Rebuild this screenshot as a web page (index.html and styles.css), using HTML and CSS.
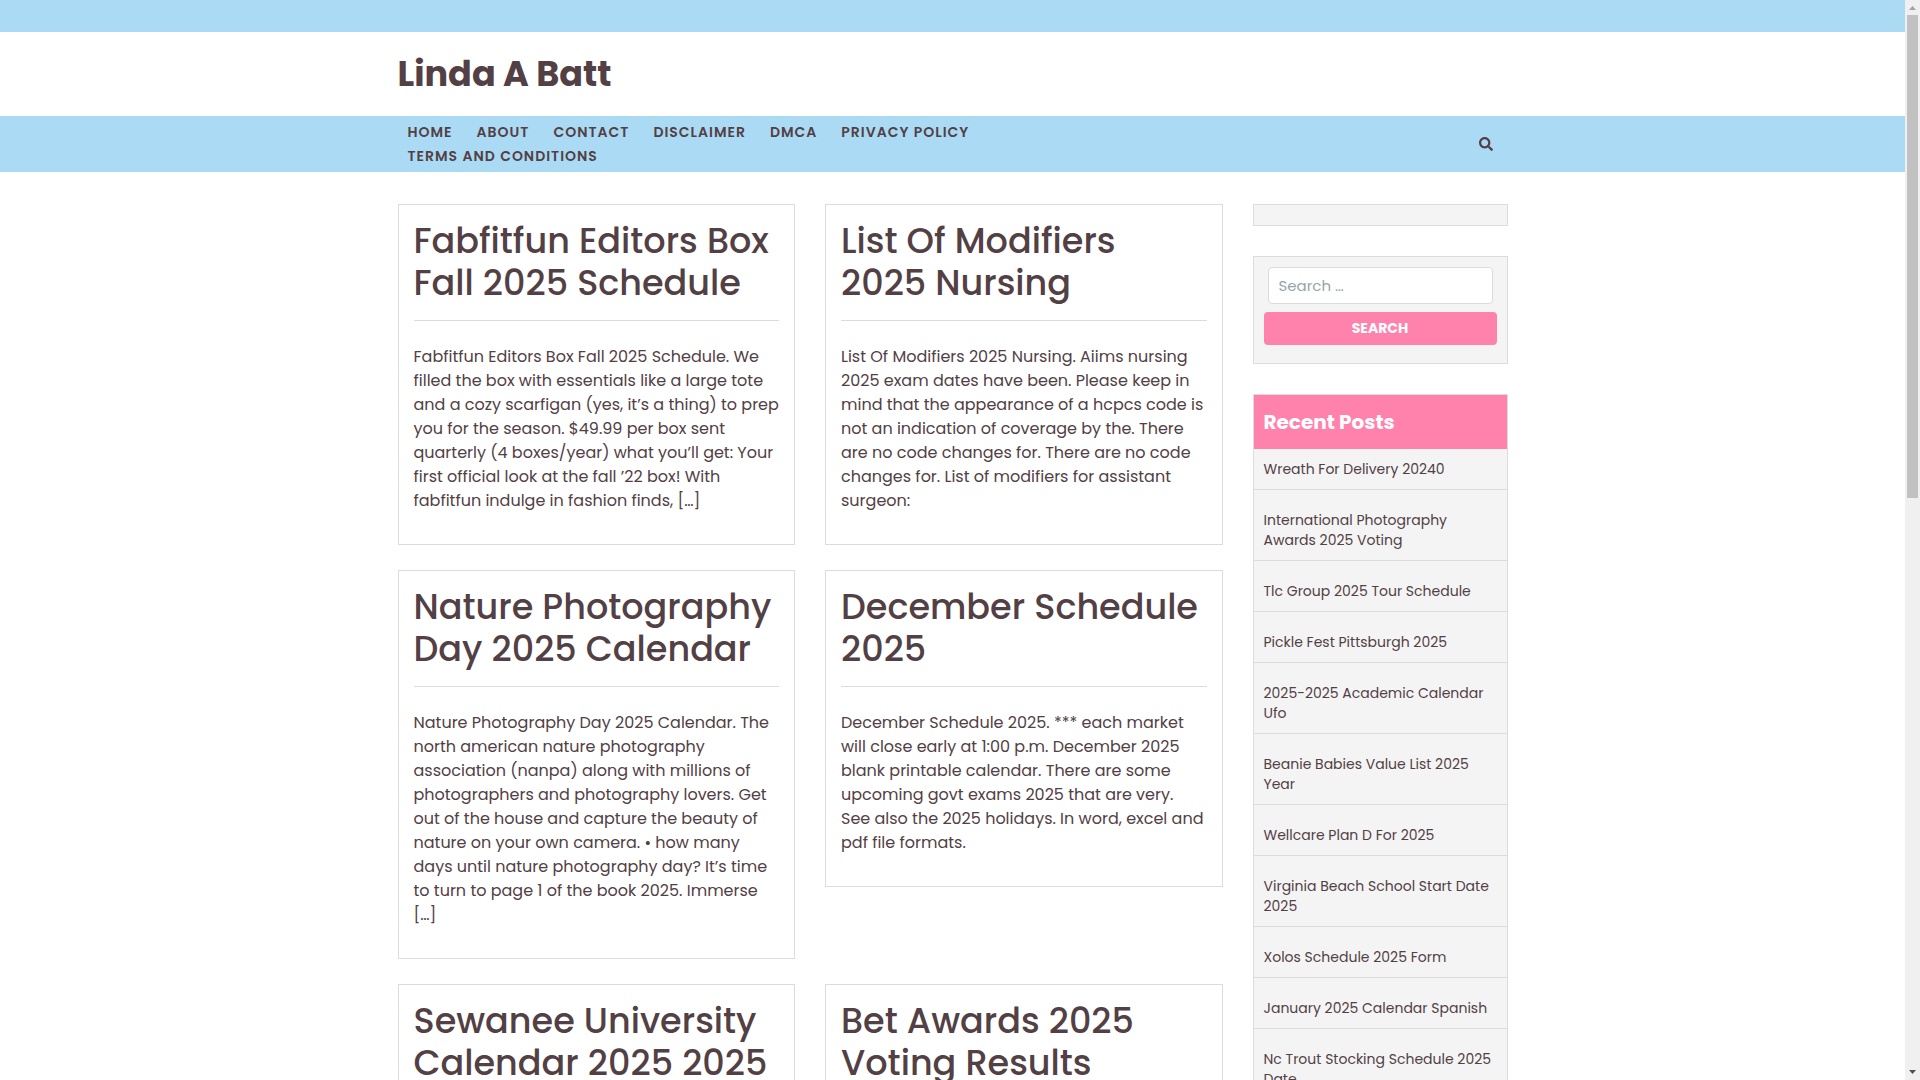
FILE: index.html
```html
<!DOCTYPE html>
<html lang="en">
  <head>
    <meta charset="UTF-8" />
    <meta name="viewport" content="width=device-width, initial-scale=1.0" />
    <title>Linda A Batt</title>
    <link rel="stylesheet" href="styles.css">
  </head>
  <body>
    <div class="top-bar"></div>

    <header class="site-header">
      <div class="container">
        <p class="site-title"><a href="#">Linda A Batt</a></p>
      </div>
    </header>

    <div class="menu-bar">
      <div class="container menu-row">
        <nav class="main-menu" aria-label="Main menu">
          <a href="#">Home</a>
          <a href="#">About</a>
          <a href="#">Contact</a>
          <a href="#">Disclaimer</a>
          <a href="#">DMCA</a>
          <a href="#">Privacy Policy</a>
          <a href="#">Terms and Conditions</a>
        </nav>
        <button class="search-toggle" type="button" aria-label="Open search">
          <svg viewBox="0 0 512 512" aria-hidden="true">
            <path d="M505 442.700L405.300 343c-4.500-4.500-10.600-7-17-7H372c27.600-35.300 44-79.700 44-128C416 93.100 322.900 0 208 0S0 93.100 0 208s93.100 208 208 208c48.300 0 92.700-16.400 128-44v16.300c0 6.400 2.500 12.500 7 17l99.700 99.700c9.400 9.400 24.600 9.400 33.900 0l28.300-28.300c9.400-9.400 9.400-24.600.1-34zM208 336c-70.700 0-128-57.200-128-128 0-70.700 57.200-128 128-128 70.700 0 128 57.200 128 128 0 70.700-57.200 128-128 128z" />
          </svg>
        </button>
      </div>
    </div>

    <div class="container page-layout">
      <main class="posts">
        <article class="post">
          <h2><a href="#">Fabfitfun Editors Box Fall 2025 Schedule</a></h2>
          <p>Fabfitfun Editors Box Fall 2025 Schedule. We filled the box with essentials like a large tote and a cozy scarfigan (yes, it’s a thing) to prep you for the season. $49.99 per box sent quarterly (4 boxes/year) what you’ll get: Your first official look at the fall ’22 box! With fabfitfun indulge in fashion finds, […]</p>
        </article>
        <article class="post">
          <h2><a href="#">List Of Modifiers 2025 Nursing</a></h2>
          <p>List Of Modifiers 2025 Nursing. Aiims nursing 2025 exam dates have been. Please keep in mind that the appearance of a hcpcs code is not an indication of coverage by the. There are no code changes for. There are no code changes for. List of modifiers for assistant surgeon:</p>
        </article>
        <article class="post">
          <h2><a href="#">Nature Photography Day 2025 Calendar</a></h2>
          <p>Nature Photography Day 2025 Calendar. The north american nature photography association (nanpa) along with millions of photographers and photography lovers. Get out of the house and capture the beauty of nature on your own camera. • how many days until nature photography day? It’s time to turn to page 1 of the book 2025. Immerse […]</p>
        </article>
        <article class="post">
          <h2><a href="#">December Schedule 2025</a></h2>
          <p>December Schedule 2025. *** each market will close early at 1:00 p.m. December 2025 blank printable calendar. There are some upcoming govt exams 2025 that are very. See also the 2025 holidays. In word, excel and pdf file formats.</p>
        </article>
        <article class="post">
          <h2><a href="#">Sewanee University Calendar 2025 2025</a></h2>
        </article>
        <article class="post">
          <h2><a href="#">Bet Awards 2025 Voting Results</a></h2>
        </article>
      </main>

      <aside class="sidebar">
        <section class="widget"></section>
        <section class="widget">
          <form class="search-form">
            <input type="search" placeholder="Search …" aria-label="Search for" />
            <button type="submit">Search</button>
          </form>
        </section>
        <section class="widget recent-posts">
          <h3>Recent Posts</h3>
          <ul>
            <li><a href="#">Wreath For Delivery 20240</a></li>
            <li><a href="#">International Photography Awards 2025 Voting</a></li>
            <li><a href="#">Tlc Group 2025 Tour Schedule</a></li>
            <li><a href="#">Pickle Fest Pittsburgh 2025</a></li>
            <li><a href="#">2025-2025 Academic Calendar Ufo</a></li>
            <li><a href="#">Beanie Babies Value List 2025 Year</a></li>
            <li><a href="#">Wellcare Plan D For 2025</a></li>
            <li><a href="#">Virginia Beach School Start Date 2025</a></li>
            <li><a href="#">Xolos Schedule 2025 Form</a></li>
            <li><a href="#">January 2025 Calendar Spanish</a></li>
            <li><a href="#">Nc Trout Stocking Schedule 2025 Date</a></li>
          </ul>
        </section>
      </aside>
    </div>

    <div class="scrollbar" aria-hidden="true">
      <svg class="arrow-up" viewBox="0 0 15 15"><path d="M4 10h7L7.500 6z" /></svg>
      <div class="scroll-track"><div class="scroll-thumb"></div></div>
      <svg class="arrow-down" viewBox="0 0 15 15"><path d="M4 5h7L7.500 9z" /></svg>
    </div>
  </body>
</html>
```
FILE: styles.css
```css
* {
  box-sizing: border-box;
}

html {
  scrollbar-width: none;
}

body {
  margin: 0;
  padding-right: 15px;
  background: #fff;
  color: #524045;
  font-family: Poppins, Inter, "Open Sans", sans-serif;
  font-size: 16px;
  line-height: 24px;
}

a {
  color: inherit;
  text-decoration: none;
}

.container {
  max-width: 1140px;
  margin: 0 auto;
  padding: 0 15px;
}

.top-bar {
  height: 32px;
  background: #abdaf4;
}

.site-header {
  padding: 15px 0;
}

.site-title {
  margin: 0;
  font-size: 35px;
  font-weight: 700;
  line-height: 54px;
}

/* menu */
.menu-bar {
  padding: 4px 0;
  background: #abdaf4;
}

.menu-row {
  display: flex;
  align-items: center;
  justify-content: space-between;
}

.main-menu {
  display: flex;
  flex-wrap: wrap;
  column-gap: 24px;
  width: 66%;
  padding: 0 10px;
  font-size: 14px;
  font-weight: 600;
  letter-spacing: 1px;
  text-transform: uppercase;
}

.search-toggle {
  width: 44px;
  height: 40px;
  padding: 0;
  border: none;
  background: none;
  color: #524045;
  cursor: pointer;
}

.search-toggle svg {
  display: block;
  width: 14px;
  height: 14px;
  margin: 0 auto;
  fill: currentColor;
}

/* posts */
.page-layout {
  display: grid;
  grid-template-columns: 1fr 255px;
  align-items: start;
  gap: 30px;
  padding-top: 32px;
}

.posts {
  display: grid;
  grid-template-columns: 1fr 1fr;
  align-items: start;
  gap: 25px 30px;
}

.post {
  padding: 15px;
  border: 1px solid #dcdcdc;
}

.post h2 {
  margin: 0 0 24px;
  padding-bottom: 16px;
  border-bottom: 1px solid #dcdcdc;
  font-size: 35px;
  font-weight: 500;
  line-height: 42px;
}

.post p {
  margin: 0 0 16px;
}

/* sidebar */
.sidebar {
  display: grid;
  grid-template-columns: minmax(0, 1fr);
  gap: 30px;
}

.widget {
  padding: 10px;
  border: 1px solid #dcdcdc;
  background: #f4f4f4;
}

.search-form {
  display: flex;
  flex-direction: column;
  gap: 8px;
  padding-bottom: 8px;
}

.search-form input {
  height: 37px;
  margin: 0 4px;
  padding: 0 10px;
  border: 1px solid #dcdcdc;
  border-radius: 4px;
  background: #fff;
  color: #524045;
  font-family: inherit;
  font-size: 15px;
}

.search-form input::placeholder {
  color: #95a5a6;
}

.search-form button {
  height: 33px;
  border: none;
  border-radius: 4px;
  background: #ff82ad;
  color: #fff;
  font-family: inherit;
  font-size: 14px;
  font-weight: 700;
  text-transform: uppercase;
  cursor: pointer;
}

.recent-posts {
  padding: 0;
}

.recent-posts h3 {
  margin: 0;
  padding: 15px 10px;
  background: #ff82ad;
  color: #fff;
  font-size: 20px;
  font-weight: 700;
  line-height: 24px;
}

.recent-posts ul {
  margin: 0;
  padding: 0;
  list-style: none;
}

.recent-posts li {
  padding: 20px 10px 10px;
  border-bottom: 1px solid #dcdcdc;
  font-size: 14px;
  line-height: 20px;
}

.recent-posts li:first-child {
  padding-top: 10px;
}

/* page scrollbar */
.scrollbar {
  position: fixed;
  top: 0;
  right: 0;
  bottom: 0;
  display: flex;
  flex-direction: column;
  width: 15px;
  background: #f0f0f0;
}

.scrollbar svg {
  width: 15px;
  height: 15px;
}

.arrow-up {
  fill: #a3a3a3;
}

.arrow-down {
  fill: #505050;
}

.scroll-track {
  flex: 1;
  padding: 0 2px;
}

.scroll-thumb {
  height: 46%;
  background: #c1c1c1;
}
```
